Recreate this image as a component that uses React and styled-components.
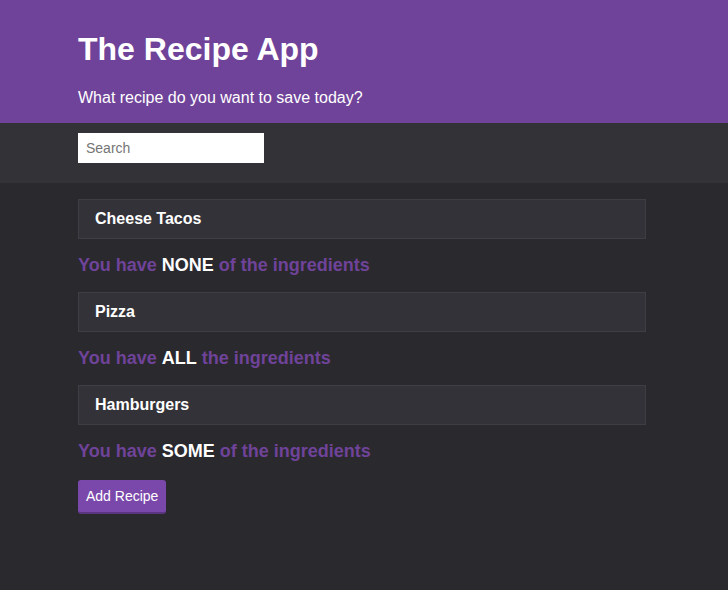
import React from "react";
import styled, { createGlobalStyle } from "styled-components";

const GlobalStyle = createGlobalStyle`
  html, body {
    margin: 0;
    padding: 0;
    background: #2a292e;
    font-family: "Liberation Sans", Arial, sans-serif;
    color: #ffffff;
  }
`;

const Page = styled.div`
  min-height: 590px;
  background: #2a292e;
`;

// content column sits 2px left of centre in the original
const Container = styled.div`
  box-sizing: border-box;
  width: 572px;
  padding-right: 4px;
  margin: 0 auto;
`;

const Header = styled.header`
  background: #6f4399;
  padding: 31px 0 16px;
`;

const Title = styled.h1`
  margin: 0 0 21px;
  font-size: 32px;
  font-weight: 700;
  line-height: 37px;
`;

const SubTitle = styled.p`
  margin: 0;
  font-size: 16px;
  line-height: 18px;
`;

const SearchBar = styled.div`
  background: #333237;
  padding: 10px 0 20px;
`;

const Input = styled.input`
  display: block;
  box-sizing: border-box;
  width: 186px;
  height: 30px;
  border: none;
  outline: none;
  padding: 0 8px;
  font-family: inherit;
  font-size: 14px;
  background: #fff;
  color: #333;

  &::placeholder {
    color: #757575;
  }
`;

const List = styled.div`
  padding-top: 16px;
`;

const Card = styled.div`
  box-sizing: border-box;
  height: 40px;
  display: flex;
  align-items: center;
  padding: 0 16px;
  background: #333238;
  border: 1px solid #3f3e45;
  font-size: 16px;
  font-weight: 700;
`;

const Status = styled.p`
  margin: 16px 0;
  font-size: 18px;
  line-height: 21px;
  font-weight: 700;
  color: #6f4399;

  strong {
    color: #fff;
  }
`;

const Button = styled.button`
  margin-top: 2px;
  height: 34px;
  padding: 0 8px;
  background: #7a48aa;
  color: #fff;
  border: none;
  border-bottom: 2px solid #5b357f;
  border-radius: 3px;
  font-family: inherit;
  font-size: 14px;
  cursor: pointer;
`;

const recipes = [
  { name: "Cheese Tacos", pre: "You have", amount: "NONE", post: "of the ingredients" },
  { name: "Pizza", pre: "You have", amount: "ALL", post: "the ingredients" },
  { name: "Hamburgers", pre: "You have", amount: "SOME", post: "of the ingredients" },
];

const App = () => {
  return (
    <Page>
      <GlobalStyle />
      <Header>
        <Container>
          <Title>The Recipe App</Title>
          <SubTitle>What recipe do you want to save today?</SubTitle>
        </Container>
      </Header>
      <SearchBar>
        <Container>
          <Input placeholder="Search" />
        </Container>
      </SearchBar>
      <Container>
        <List>
          {recipes.map((r) => (
            <div key={r.name}>
              <Card>{r.name}</Card>
              <Status>
                {r.pre} <strong>{r.amount}</strong> {r.post}
              </Status>
            </div>
          ))}
          <Button>Add Recipe</Button>
        </List>
      </Container>
    </Page>
  );
};

export default App;
